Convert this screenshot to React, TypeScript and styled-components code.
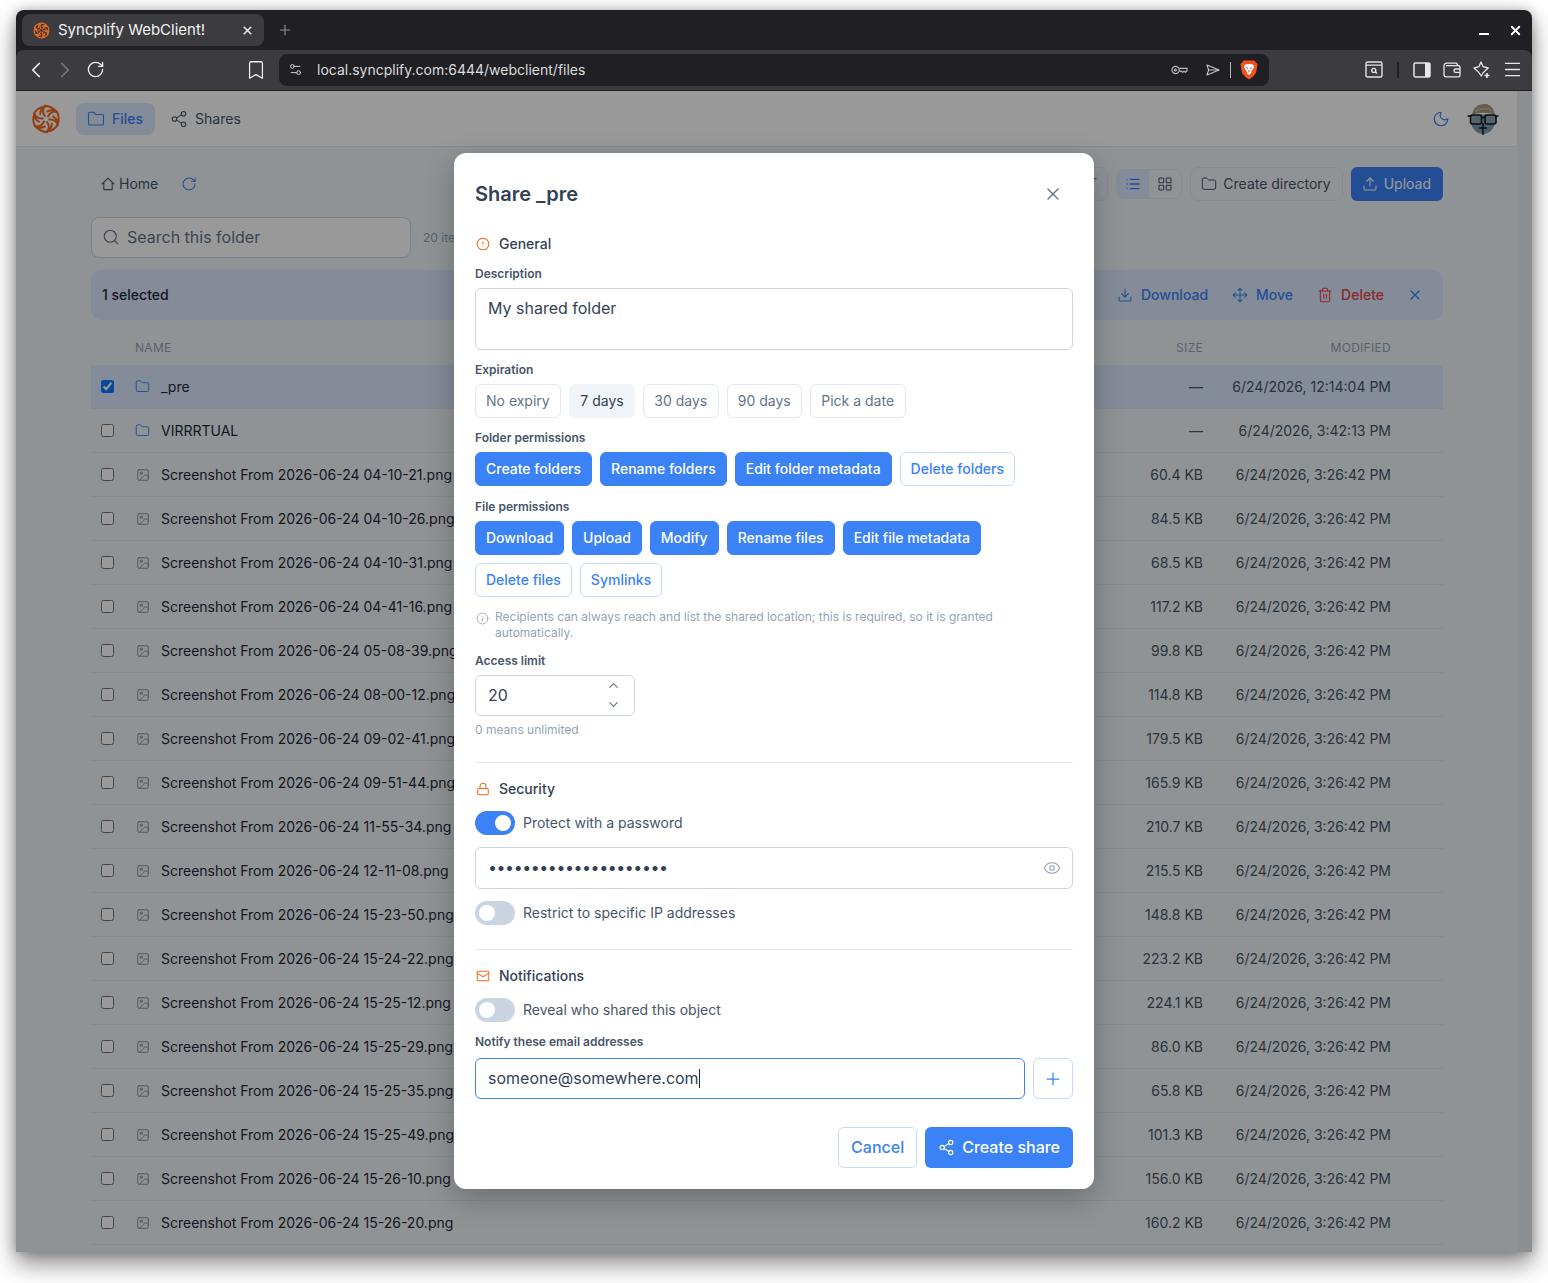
import React from 'react';
import styled, { createGlobalStyle } from 'styled-components';
import {
    ArrowDownWideNarrow,
    Bookmark,
    ChevronDown,
    ChevronLeft,
    ChevronRight,
    ChevronUp,
    CircleAlert,
    Download,
    Eye,
    Folder,
    Image,
    Info,
    LayoutGrid,
    List,
    Lock,
    Mail,
    Menu,
    Moon,
    Move,
    Plus,
    RotateCw,
    Search,
    Settings2,
    Share2,
    Trash2,
    Upload,
    X,
} from 'lucide-react';

const files: [string, string][] = [
    ['04-10-21', '60.4 KB'],
    ['04-10-26', '84.5 KB'],
    ['04-10-31', '68.5 KB'],
    ['04-41-16', '117.2 KB'],
    ['05-08-39', '99.8 KB'],
    ['08-00-12', '114.8 KB'],
    ['09-02-41', '179.5 KB'],
    ['09-51-44', '165.9 KB'],
    ['11-55-34', '210.7 KB'],
    ['12-11-08', '215.5 KB'],
    ['15-23-50', '148.8 KB'],
    ['15-24-22', '223.2 KB'],
    ['15-25-12', '224.1 KB'],
    ['15-25-29', '86.0 KB'],
    ['15-25-35', '65.8 KB'],
    ['15-25-49', '101.3 KB'],
    ['15-26-10', '156.0 KB'],
    ['15-26-20', '160.2 KB'],
];

const Logo = ({ size }: { size: number }) => (
    <svg width={size} height={size} viewBox="-16 -16 32 32" fill="none" stroke="#f26a1b" strokeWidth="2.2" strokeLinejoin="round" strokeLinecap="round">
        {[0, 60, 120, 180, 240, 300].map((angle) => (
            <path
                key={angle}
                transform={`rotate(${angle})`}
                d="M-1.2 -3.2 C-3.6 -6.6 -3.6 -10.6 -1.2 -14 C3 -14.2 8.6 -11.4 11 -7.6 C8 -9.4 4.4 -9.6 1.4 -8"
            />
        ))}
    </svg>
);

const BraveIcon = () => (
    <svg width="18" height="20" viewBox="0 0 18 20">
        <path d="M4 0.5 H14 L17.5 4 L16.2 12 C15.6 14.6 11.5 18 9 19.5 C6.5 18 2.4 14.6 1.8 12 L0.5 4 Z" fill="#f4511e" />
        <path d="M4.5 5 L7 4 H11 L13.5 5 L14 7.5 L11.5 11 L11 13.5 L9 15 L7 13.5 L6.5 11 L4 7.5 Z" fill="#fff" />
        <path d="M6.3 7.5 L8 8.4 M11.7 7.5 L10 8.4 M9 10 V12.6" stroke="#f4511e" strokeWidth="1.1" />
    </svg>
);

const KeyIcon = () => (
    <svg width="17" height="12" viewBox="0 0 17 12" fill="none" stroke="#b9b9bc" strokeWidth="1.2">
        <circle cx="4.6" cy="6" r="3.6" />
        <circle cx="4.4" cy="6" r="1" />
        <path d="M8.2 4.4 H16 V7 L14.4 8.2 L13 7.2 L11.6 8.2 L10.2 7.2 H8.2" />
    </svg>
);

const SendIcon = () => (
    <svg width="14" height="12" viewBox="0 0 14 12" fill="none" stroke="#c8c8cb" strokeWidth="1.1" strokeLinejoin="round">
        <path d="M1 1 L13 6 L1 11 L2.6 6 Z" />
        <path d="M2.6 6 H13" />
    </svg>
);

const PageSearchIcon = () => (
    <svg width="18" height="17" viewBox="0 0 18 17" fill="none" stroke="#e4e4e6" strokeWidth="1.4">
        <rect x="1" y="1" width="16" height="15" rx="1.6" />
        <path d="M1 4.2 H17" strokeWidth="1.2" />
        <circle cx="8.8" cy="9.4" r="2" />
        <path d="M10.3 10.9 L12 12.6" />
    </svg>
);

const SidebarIcon = () => (
    <svg width="18" height="16" viewBox="0 0 18 16">
        <rect x="1" y="1" width="16" height="14" rx="1.6" fill="none" stroke="#e8e8ea" strokeWidth="1.5" />
        <rect x="12" y="1" width="5" height="14" fill="#e8e8ea" />
    </svg>
);

const WalletIcon = () => (
    <svg width="18" height="16" viewBox="0 0 18 16" fill="none" stroke="#e8e8ea" strokeWidth="1.3">
        <path d="M1 4 C1 2.4 2 1.2 3.6 1.2 H13.5 L15 3.6 M1 4 V12.6 C1 14 2 14.8 3.2 14.8 H15.4 C16.4 14.8 17 14.2 17 13.2 V5 C17 4 16.4 3.6 15.4 3.6 H3" />
        <path d="M17 7 H12.6 C11.4 7 11 7.8 11 8.7 C11 9.6 11.6 10.4 12.6 10.4 H17" />
    </svg>
);

const SparkleIcon = () => (
    <svg width="18" height="18" viewBox="0 0 18 18" fill="none" stroke="#e8e8ea" strokeWidth="1.3" strokeLinejoin="round">
        <path d="M8 1 L10 5.6 L15.2 7 L11.6 10.2 C10 11.4 9.6 13 8.2 15 C6.8 13 6 11 4.4 10 L1 7 L6 5.6 Z" />
        <path d="M14 12 V17 M11.6 14.5 H16.4" strokeWidth="1.6" />
    </svg>
);

const HomeIcon = () => (
    <svg width="14" height="14" viewBox="0 0 14 14" fill="none" stroke="currentColor" strokeWidth="1.1" strokeLinejoin="round" strokeLinecap="round">
        <path d="M1 7 L7 1.2 L13 7" />
        <path d="M2.8 5.6 V12.6 H11.2 V5.6" />
    </svg>
);

const Avatar = () => (
    <svg width="32" height="32" viewBox="0 0 32 32">
        <path d="M4 16 C4 10 27 10 28 16 C29 25 22 31 16 31 C10 31 3 25 4 16 Z" fill="#7f9db5" />
        <path d="M5 12 C6 4 12 0.5 18 1 C24 1.5 27 6 28 12 C20 9 12 9 5 12 Z" fill="#a89c80" />
        <path d="M8 9 C12 5 20 4.5 25 8" stroke="#c2b79c" strokeWidth="1.6" fill="none" />
        <rect x="3.5" y="12" width="11" height="9" rx="2" fill="#8fa3b5" stroke="#15171a" strokeWidth="1.6" />
        <rect x="18" y="12" width="11" height="9" rx="2" fill="#8fa3b5" stroke="#15171a" strokeWidth="1.6" />
        <path d="M14 14.5 H18 M16 20 V32 M12 25 H20" stroke="#15171a" strokeWidth="1.5" />
        <path d="M0.5 13 H3.5 M29 13 H31.5" stroke="#15171a" strokeWidth="1.4" />
    </svg>
);

const App: React.FC = () => (
    <>
        <GlobalStyle />
        <BrowserWindow>
            <TabStrip>
                <Tab>
                    <Logo size={17} />
                    <TabTitle>Syncplify WebClient!</TabTitle>
                    <X size={13} strokeWidth={3} color="#e8e8ea" />
                </Tab>
                <NewTab>
                    <Plus size={16} strokeWidth={1.7} />
                </NewTab>
                <WindowControls>
                    <MinimizeMark />
                    <X size={15} strokeWidth={3} color="#ffffff" />
                </WindowControls>
            </TabStrip>
            <BrowserBar>
                <BarButton>
                    <ChevronLeft size={26} strokeWidth={1.6} />
                </BarButton>
                <BarButton $dim>
                    <ChevronRight size={26} strokeWidth={1.6} />
                </BarButton>
                <ReloadButton>
                    <RotateCw size={19} strokeWidth={1.7} />
                </ReloadButton>
                <BookmarkSlot>
                    <Bookmark size={22} strokeWidth={1.4} />
                </BookmarkSlot>
                <AddressBar>
                    <Settings2 size={15} strokeWidth={1.6} color="#cfcfd2" />
                    <AddressText>local.syncplify.com:6444/webclient/files</AddressText>
                    <KeyIcon />
                    <SendSlot>
                        <SendIcon />
                    </SendSlot>
                    <AddressDivider />
                    <BraveIcon />
                </AddressBar>
                <BarTools>
                    <PageSearchIcon />
                    <ToolDivider />
                    <SidebarIcon />
                    <WalletIcon />
                    <SparkleIcon />
                    <BarMenu />
                </BarTools>
            </BrowserBar>
            <Viewport>
                <Page>
                    <TopNav>
                        <LogoSlot>
                            <Logo size={30} />
                        </LogoSlot>
                        <NavLink $active>
                            <Folder size={18} strokeWidth={1.5} />
                            Files
                        </NavLink>
                        <NavLink>
                            <Share2 size={18} strokeWidth={1.5} />
                            Shares
                        </NavLink>
                        <NavEnd>
                            <Moon size={18} strokeWidth={1.6} color="#3b82f6" />
                            <Avatar />
                        </NavEnd>
                    </TopNav>
                    <Main>
                        <Toolbar>
                            <Crumb>
                                <HomeIcon />
                                Home
                            </Crumb>
                            <RotateCw size={16} strokeWidth={1.6} color="#3b82f6" />
                            <ToolbarEnd>
                                <SortButton>
                                    <ArrowDownWideNarrow size={16} strokeWidth={1.5} />
                                </SortButton>
                                <ViewToggle>
                                    <ViewOption $active>
                                        <List size={16} strokeWidth={2} />
                                    </ViewOption>
                                    <ViewOption>
                                        <LayoutGrid size={16} strokeWidth={1.6} />
                                    </ViewOption>
                                </ViewToggle>
                                <GhostButton>
                                    <Folder size={16} strokeWidth={1.5} />
                                    Create directory
                                </GhostButton>
                                <UploadButton>
                                    <Upload size={16} strokeWidth={1.6} />
                                    Upload
                                </UploadButton>
                            </ToolbarEnd>
                        </Toolbar>
                        <SearchRow>
                            <SearchBox>
                                <Search size={18} strokeWidth={1.5} color="#64748b" />
                                Search this folder
                            </SearchBox>
                            <ItemCount>20 items</ItemCount>
                        </SearchRow>
                        <SelectionBar>
                            <SelectedCount>1 selected</SelectedCount>
                            <SelectionAction>
                                <Download size={16} strokeWidth={1.6} />
                                Download
                            </SelectionAction>
                            <SelectionAction>
                                <Move size={16} strokeWidth={1.6} />
                                Move
                            </SelectionAction>
                            <SelectionAction $danger>
                                <Trash2 size={16} strokeWidth={1.6} />
                                Delete
                            </SelectionAction>
                            <SelectionClose />
                        </SelectionBar>
                        <HeaderRow>
                            <HeadName>Name</HeadName>
                            <HeadCell>Size</HeadCell>
                            <HeadCell>Modified</HeadCell>
                        </HeaderRow>
                        <Row $selected>
                            <Tick type="checkbox" checked readOnly />
                            <FolderGlyph><Folder size={17} strokeWidth={1.5} /></FolderGlyph>
                            <Name>_pre</Name>
                            <Meta>—</Meta>
                            <Meta>6/24/2026, 12:14:04 PM</Meta>
                        </Row>
                        <Row>
                            <Tick type="checkbox" readOnly />
                            <FolderGlyph><Folder size={17} strokeWidth={1.5} /></FolderGlyph>
                            <Name>VIRRRTUAL</Name>
                            <Meta>—</Meta>
                            <Meta>6/24/2026, 3:42:13 PM</Meta>
                        </Row>
                        {files.map(([stamp, size]) => (
                            <Row key={stamp}>
                                <Tick type="checkbox" readOnly />
                                <FileGlyph><Image size={18} strokeWidth={1.3} /></FileGlyph>
                                <Name>{`Screenshot From 2026-06-24 ${stamp}.png`}</Name>
                                <Meta>{size}</Meta>
                                <Meta>6/24/2026, 3:26:42 PM</Meta>
                            </Row>
                        ))}
                    </Main>
                </Page>
                <Gutter />
                <Backdrop>
                    <Modal>
                        <ModalHead>
                            <ModalTitle>Share _pre</ModalTitle>
                            <X size={20} strokeWidth={1.6} color="#64748b" />
                        </ModalHead>
                        <SectionTitle $top={18}>
                            <CircleAlert size={14} strokeWidth={1.8} />
                            General
                        </SectionTitle>
                        <Label $top={11}>Description</Label>
                        <TextArea>My shared folder</TextArea>
                        <Label $top={12}>Expiration</Label>
                        <ChipRow>
                            <Chip>No expiry</Chip>
                            <Chip $picked>7 days</Chip>
                            <Chip>30 days</Chip>
                            <Chip>90 days</Chip>
                            <Chip>Pick a date</Chip>
                        </ChipRow>
                        <Label $top={12}>Folder permissions</Label>
                        <ChipRow>
                            <Perm $on>Create folders</Perm>
                            <Perm $on>Rename folders</Perm>
                            <Perm $on>Edit folder metadata</Perm>
                            <Perm>Delete folders</Perm>
                        </ChipRow>
                        <Label $top={13}>File permissions</Label>
                        <ChipRow>
                            <Perm $on>Download</Perm>
                            <Perm $on>Upload</Perm>
                            <Perm $on>Modify</Perm>
                            <Perm $on>Rename files</Perm>
                            <Perm $on>Edit file metadata</Perm>
                            <Perm>Delete files</Perm>
                            <Perm>Symlinks</Perm>
                        </ChipRow>
                        <Note>
                            <Info size={13} strokeWidth={1.6} />
                            <span>Recipients can always reach and list the shared location; this is required, so it is granted automatically.</span>
                        </Note>
                        <Label $top={12}>Access limit</Label>
                        <NumberField>
                            20
                            <Spinner>
                                <ChevronUp size={15} strokeWidth={1.8} />
                                <ChevronDown size={15} strokeWidth={1.8} />
                            </Spinner>
                        </NumberField>
                        <Hint>0 means unlimited</Hint>
                        <Divider />
                        <SectionTitle $top={15}>
                            <Lock size={14} strokeWidth={1.8} />
                            Security
                        </SectionTitle>
                        <SwitchRow $top={11}>
                            <Switch $on />
                            Protect with a password
                        </SwitchRow>
                        <PasswordField>
                            <Dots>•••••••••••••••••••••</Dots>
                            <Eye size={18} strokeWidth={1.5} color="#94a3b8" />
                        </PasswordField>
                        <SwitchRow $top={12}>
                            <Switch />
                            Restrict to specific IP addresses
                        </SwitchRow>
                        <Divider />
                        <SectionTitle $top={15}>
                            <Mail size={14} strokeWidth={1.8} />
                            Notifications
                        </SectionTitle>
                        <SwitchRow $top={11}>
                            <Switch />
                            Reveal who shared this object
                        </SwitchRow>
                        <Label $top={12} $bottom={8}>Notify these email addresses</Label>
                        <EmailRow>
                            <EmailField>
                                someone@somewhere.com
                                <Caret />
                            </EmailField>
                            <AddButton>
                                <Plus size={20} strokeWidth={1.5} />
                            </AddButton>
                        </EmailRow>
                        <ModalFooter>
                            <CancelButton>Cancel</CancelButton>
                            <CreateButton>
                                <Share2 size={17} strokeWidth={1.6} />
                                Create share
                            </CreateButton>
                        </ModalFooter>
                    </Modal>
                </Backdrop>
            </Viewport>
        </BrowserWindow>
    </>
);

export default App;

const GlobalStyle = createGlobalStyle`
    html, body {
        margin: 0;
        min-height: 1283px;
        background: #ffffff;
    }
    body {
        font-family: Inter, "Liberation Sans", sans-serif;
        line-height: 20px;
        overflow: hidden;
    }
    #root {
        padding-top: 10px;
    }
    * {
        box-sizing: border-box;
    }
`;

const BrowserWindow = styled.div`
    width: 1516px;
    height: 1242px;
    margin-left: 16px;
    border-radius: 8px 8px 0 0;
    background: #1f1f24;
    box-shadow: 0 12px 24px rgba(0, 0, 0, 0.45), 0 0 12px rgba(0, 0, 0, 0.25);
    overflow: hidden;
    display: flex;
    flex-direction: column;
`;

const TabStrip = styled.div`
    height: 40px;
    flex: none;
    display: flex;
    align-items: center;
    padding: 0 9px 0 6px;
`;

const Tab = styled.div`
    width: 242px;
    height: 32px;
    display: flex;
    align-items: center;
    padding: 0 10px 0 11px;
    border-radius: 8px;
    background: #3b3b40;
    color: #f1f1f2;
`;

const TabTitle = styled.span`
    flex: 1;
    margin-left: 8px;
    font-size: 15px;
`;

const NewTab = styled.div`
    display: flex;
    margin-left: 13px;
    color: #8f8f94;
`;

const WindowControls = styled.div`
    margin-left: auto;
    display: flex;
    align-items: center;
    gap: 19px;
`;

const MinimizeMark = styled.span`
    width: 10px;
    height: 2px;
    margin-top: 8px;
    background: #ffffff;
`;

const BrowserBar = styled.div`
    height: 41px;
    flex: none;
    display: flex;
    align-items: center;
    padding: 0 9px 1px 5px;
    border-radius: 8px 8px 0 0;
    border-bottom: 1px solid #1f1f24;
    background: #3b3b40;
`;

const BarButton = styled.div<{ $dim?: boolean }>`
    width: 29px;
    display: flex;
    justify-content: center;
    color: ${({ $dim }) => ($dim ? '#77777c' : '#ededee')};
`;

const ReloadButton = styled(BarButton)`
    margin-left: 2px;
`;

const BookmarkSlot = styled.div`
    display: flex;
    margin-left: 135px;
    color: #ededee;
`;

const AddressBar = styled.div`
    width: 990px;
    height: 32px;
    margin-left: 12px;
    padding: 0 11px 0 9px;
    display: flex;
    align-items: center;
    border-radius: 8px;
    background: #202024;
`;

const AddressText = styled.span`
    flex: 1;
    margin-left: 14px;
    color: #dcdcde;
    font-size: 14px;
`;

const SendSlot = styled.div`
    display: flex;
    margin-left: 18px;
`;

const AddressDivider = styled.span`
    width: 1px;
    height: 16px;
    margin: 0 9px 0 10px;
    background: #b8b8bb;
`;

const BarTools = styled.div`
    margin-left: auto;
    display: flex;
    align-items: center;
    gap: 12px;
`;

const ToolDivider = styled.span`
    width: 2px;
    height: 16px;
    margin: 0 2px 0 2px;
    background: #202024;
`;

const BarMenu = styled(Menu).attrs({ size: 21, strokeWidth: 1.5, color: '#e8e8ea' })`
    margin-left: -1px;
`;

const Viewport = styled.div`
    position: relative;
    flex: 1;
    min-height: 0;
    display: flex;
    overflow: hidden;
    background: #f1f5f9;
`;

const Page = styled.div`
    width: 1501px;
    flex: none;
`;

const Gutter = styled.div`
    flex: 1;
    background: #e9eef4;
`;

const TopNav = styled.header`
    height: 56px;
    display: flex;
    align-items: center;
    padding: 0 18px 0 15px;
    border-bottom: 1px solid #e2e8f0;
    background: #ffffff;
`;

const LogoSlot = styled.div`
    display: flex;
    margin-right: 15px;
`;

const NavLink = styled.div<{ $active?: boolean }>`
    height: 32px;
    display: flex;
    align-items: center;
    gap: 7px;
    padding: 0 12px 0 11px;
    margin-right: 4px;
    border-radius: 8px;
    font-size: 14px;
    font-weight: ${({ $active }) => ($active ? 500 : 400)};
    color: ${({ $active }) => ($active ? '#3b82f6' : '#475569')};
    background: ${({ $active }) => ($active ? '#dbeafe' : 'transparent')};
`;

const NavEnd = styled.div`
    margin-left: auto;
    display: flex;
    align-items: center;
    gap: 17px;
`;

const Main = styled.main`
    padding: 20px 74px 0 75px;
`;

const Toolbar = styled.div`
    height: 34px;
    display: flex;
    align-items: center;
    padding-left: 10px;
    gap: 23px;
`;

const Crumb = styled.div`
    display: flex;
    align-items: center;
    gap: 4px;
    font-size: 14px;
    color: #475569;
`;

const ToolbarEnd = styled.div`
    margin-left: auto;
    display: flex;
    align-items: center;
    gap: 8px;
`;

const SortButton = styled.div`
    width: 36px;
    height: 34px;
    display: flex;
    align-items: center;
    justify-content: center;
    border: 1px solid #e2e8f0;
    border-radius: 8px;
    color: #475569;
`;

const ViewToggle = styled.div`
    display: flex;
    height: 30px;
    border: 1px solid #e2e8f0;
    border-radius: 8px;
    overflow: hidden;
`;

const ViewOption = styled.div<{ $active?: boolean }>`
    width: 32px;
    display: flex;
    align-items: center;
    justify-content: center;
    color: ${({ $active }) => ($active ? '#3b82f6' : '#475569')};
    background: ${({ $active }) => ($active ? '#dbeafe' : 'transparent')};
`;

const GhostButton = styled.div`
    height: 34px;
    display: flex;
    align-items: center;
    gap: 6px;
    padding: 0 11px 0 10px;
    border: 1px solid #e2e8f0;
    border-radius: 8px;
    font-size: 14px;
    color: #475569;
`;

const UploadButton = styled.div`
    height: 34px;
    display: flex;
    align-items: center;
    gap: 6px;
    padding: 0 12px 0 11px;
    border-radius: 6px;
    font-size: 14px;
    color: #ffffff;
    background: #3b82f6;
`;

const SearchRow = styled.div`
    display: flex;
    align-items: center;
    margin-top: 16px;
`;

const SearchBox = styled.div`
    width: 320px;
    height: 41px;
    display: flex;
    align-items: center;
    gap: 7px;
    padding: 0 10px 1px;
    border: 1px solid #cbd5e1;
    border-radius: 8px;
    background: #ffffff;
    font-size: 16px;
    color: #64748b;
`;

const ItemCount = styled.span`
    margin-left: 12px;
    font-size: 12px;
    color: #94a3b8;
`;

const SelectionBar = styled.div`
    height: 50px;
    margin-top: 12px;
    display: flex;
    align-items: center;
    gap: 24px;
    padding: 0 20px 0 11px;
    border-radius: 10px;
    background: #dbeafe;
`;

const SelectedCount = styled.span`
    margin-right: auto;
    font-size: 14px;
    font-weight: 500;
    color: #1e293b;
`;

const SelectionAction = styled.div<{ $danger?: boolean }>`
    display: flex;
    align-items: center;
    gap: 8px;
    font-size: 14px;
    font-weight: 500;
    color: ${({ $danger }) => ($danger ? '#ef4444' : '#3b82f6')};
`;

const SelectionClose = styled(X).attrs({ size: 16, strokeWidth: 1.8, color: '#3b82f6' })`
    margin-left: -1px;
`;

const HeaderRow = styled.div`
    height: 45px;
    display: grid;
    grid-template-columns: 1fr 120px 188px;
    align-items: center;
    padding: 10px 52px 0 44px;
`;

const HeadCell = styled.span`
    font-size: 12px;
    text-align: right;
    text-transform: uppercase;
    letter-spacing: 0.3px;
    color: #94a3b8;
`;

const HeadName = styled(HeadCell)`
    text-align: left;
`;

const Row = styled.div<{ $selected?: boolean }>`
    height: 44px;
    display: grid;
    grid-template-columns: 13px 36px 1fr 120px 188px;
    align-items: center;
    padding: 0 52px 0 10px;
    border-bottom: 1px solid #e2e8f0;
    background: ${({ $selected }) => ($selected ? '#dbeafe' : 'transparent')};
`;

const Tick = styled.input`
    width: 13px;
    height: 13px;
    margin: 0;
    accent-color: #0f7bff;
`;

const FolderGlyph = styled.span`
    display: flex;
    margin-left: 21px;
    color: #3b82f6;
`;

const FileGlyph = styled(FolderGlyph)`
    margin-left: 22px;
    color: #64748b;
`;

const Name = styled.span`
    margin-left: 11px;
    font-size: 14px;
    white-space: nowrap;
    color: #1e293b;
`;

const Meta = styled.span`
    font-size: 14px;
    text-align: right;
    white-space: nowrap;
    color: #475569;
`;

const Backdrop = styled.div`
    position: absolute;
    inset: 0;
    display: flex;
    align-items: center;
    justify-content: center;
    padding-bottom: 1px;
    background: rgba(0, 0, 0, 0.4);
`;

const Modal = styled.section`
    width: 640px;
    height: 1036px;
    padding: 20px 21px 21px;
    border-radius: 12px;
    background: #ffffff;
    color: #334155;
    box-shadow: 0 10px 30px rgba(0, 0, 0, 0.25);
    display: flex;
    flex-direction: column;
`;

const ModalHead = styled.div`
    height: 42px;
    flex: none;
    display: flex;
    align-items: center;
    justify-content: space-between;
    padding-right: 10px;
`;

const ModalTitle = styled.h2`
    margin: 0;
    font-size: 20px;
    font-weight: 600;
    color: #334155;
`;

const SectionTitle = styled.div<{ $top: number }>`
    flex: none;
    display: flex;
    align-items: center;
    gap: 9px;
    margin-top: ${({ $top }) => $top}px;
    height: 22px;
    padding-left: 1px;
    font-size: 14px;
    font-weight: 500;
    color: #334155;

    svg {
        color: #f26a1b;
    }
`;

const Label = styled.div<{ $top: number; $bottom?: number }>`
    flex: none;
    margin-top: ${({ $top }) => $top}px;
    margin-bottom: ${({ $bottom }) => $bottom ?? 6}px;
    height: 16px;
    line-height: 16px;
    font-size: 12px;
    font-weight: 600;
    color: #475569;
`;

const TextArea = styled.div`
    height: 62px;
    flex: none;
    padding: 9px 12px;
    border: 1px solid #cbd5e1;
    border-radius: 6px;
    font-size: 16px;
    line-height: 20px;
    color: #334155;
`;

const ChipRow = styled.div`
    flex: none;
    display: flex;
    flex-wrap: wrap;
    gap: 8px;
`;

const Chip = styled.div<{ $picked?: boolean }>`
    height: 34px;
    display: flex;
    align-items: center;
    padding: 0 10.6px 0 10px;
    border: 1px solid ${({ $picked }) => ($picked ? '#f1f5f9' : '#e2e8f0')};
    border-radius: 6px;
    font-size: 14px;
    color: ${({ $picked }) => ($picked ? '#334155' : '#64748b')};
    background: ${({ $picked }) => ($picked ? '#f1f5f9' : '#ffffff')};
`;

const Perm = styled.div<{ $on?: boolean }>`
    height: 34px;
    display: flex;
    align-items: center;
    padding: 0 10px;
    border: 1px solid ${({ $on }) => ($on ? '#3b82f6' : '#bfdbfe')};
    border-radius: 6px;
    font-size: 14px;
    font-weight: 500;
    color: ${({ $on }) => ($on ? '#ffffff' : '#3b82f6')};
    background: ${({ $on }) => ($on ? '#3b82f6' : '#ffffff')};
`;

const Note = styled.div`
    flex: none;
    display: flex;
    gap: 6px;
    margin-top: 12px;
    font-size: 12px;
    line-height: 16px;
    color: #94a3b8;

    svg {
        flex: none;
        margin: 3px 0 0 1px;
    }

    span {
        max-width: 520px;
    }
`;

const NumberField = styled.div`
    width: 160px;
    height: 41px;
    flex: none;
    display: flex;
    align-items: center;
    justify-content: space-between;
    padding: 0 13px 1px 12px;
    border: 1px solid #cbd5e1;
    border-radius: 6px;
    font-size: 16px;
    color: #334155;
`;

const Spinner = styled.div`
    display: flex;
    flex-direction: column;
    gap: 4px;
    color: #64748b;
`;

const Hint = styled.div`
    flex: none;
    margin-top: 6px;
    font-size: 12px;
    line-height: 16px;
    color: #94a3b8;
`;

const Divider = styled.div`
    height: 1px;
    flex: none;
    margin-top: 24px;
    background: #e2e8f0;
`;

const SwitchRow = styled.div<{ $top: number }>`
    flex: none;
    display: flex;
    align-items: center;
    gap: 8px;
    height: 24px;
    margin-top: ${({ $top }) => $top}px;
    font-size: 14px;
    color: #475569;
`;

const Switch = styled.span<{ $on?: boolean }>`
    position: relative;
    width: 40px;
    height: 24px;
    border-radius: 12px;
    background: ${({ $on }) => ($on ? '#3b82f6' : '#cbd5e1')};

    &::after {
        content: '';
        position: absolute;
        top: 4px;
        left: ${({ $on }) => ($on ? '20px' : '4px')};
        width: 16px;
        height: 16px;
        border-radius: 50%;
        background: #ffffff;
    }
`;

const PasswordField = styled.div`
    height: 42px;
    flex: none;
    margin-top: 12px;
    display: flex;
    align-items: center;
    justify-content: space-between;
    padding: 0 11px 0 12px;
    border: 1px solid #cbd5e1;
    border-radius: 6px;
`;

const Dots = styled.span`
    margin-top: -2px;
    font-size: 16px;
    letter-spacing: -0.45px;
    color: #334155;
`;

const EmailRow = styled.div`
    flex: none;
    display: flex;
    gap: 8px;
`;

const EmailField = styled.div`
    flex: 1;
    height: 41px;
    display: flex;
    align-items: center;
    padding: 0 12px 1px;
    border: 1px solid #3b82f6;
    border-radius: 6px;
    font-size: 16px;
    color: #334155;
`;

const Caret = styled.span`
    width: 1px;
    height: 19px;
    background: #1e293b;
`;

const AddButton = styled.div`
    width: 40px;
    height: 41px;
    display: flex;
    align-items: center;
    justify-content: center;
    border: 1px solid #bfdbfe;
    border-radius: 6px;
    color: #3b82f6;
`;

const ModalFooter = styled.div`
    flex: none;
    display: flex;
    justify-content: flex-end;
    gap: 8px;
    margin-top: auto;
`;

const CancelButton = styled.div`
    height: 41px;
    display: flex;
    align-items: center;
    padding: 0 12px 1px;
    border: 1px solid #bfdbfe;
    border-radius: 6px;
    font-size: 16px;
    font-weight: 500;
    color: #3b82f6;
`;

const CreateButton = styled.div`
    height: 41px;
    display: flex;
    align-items: center;
    gap: 7px;
    padding: 0 13px 1px;
    border-radius: 6px;
    font-size: 16px;
    font-weight: 500;
    color: #ffffff;
    background: #3b82f6;
`;
